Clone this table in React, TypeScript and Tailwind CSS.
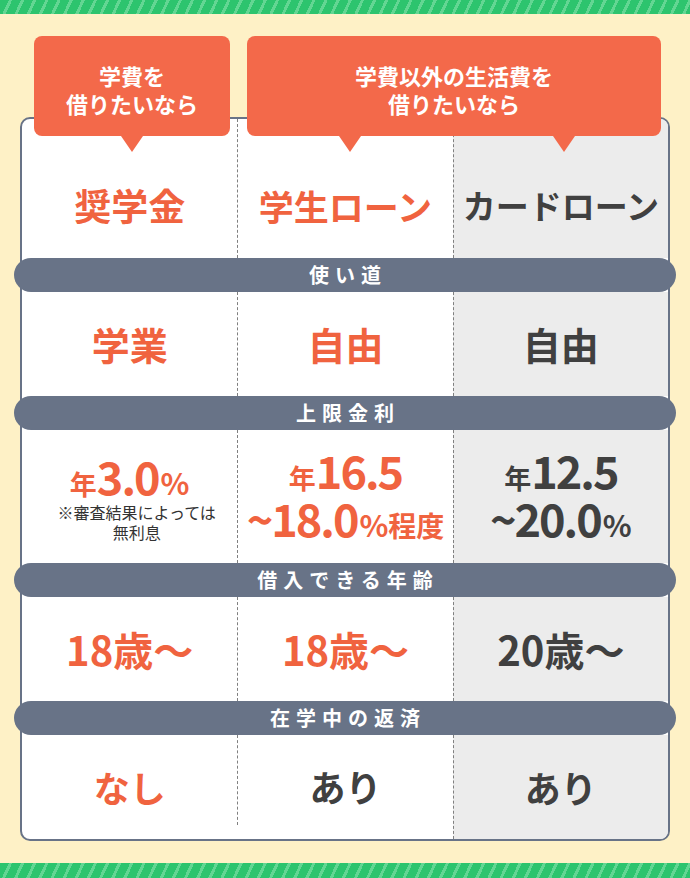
import type { ReactNode } from 'react';

const STRIPE =
  'bg-[repeating-linear-gradient(115deg,#2dc46e_0px,#2dc46e_8px,#63d693_8px,#63d693_11px)]';

function Band({ label }: { label: string }) {
  return (
    <div className="relative z-10 -mx-[8px] flex h-[34px] items-center justify-center rounded-full bg-[#687387]">
      <span className="pl-[6px] text-[20px] font-bold leading-none tracking-[6px] text-white">{label}</span>
    </div>
  );
}

interface RowProps {
  height: string;
  cells: [ReactNode, ReactNode, ReactNode];
  first?: boolean;
  last?: boolean;
  pad?: string;
}

function Row({ height, cells, first, last, pad = '' }: RowProps) {
  return (
    <div className={`grid grid-cols-3 items-start ${height}`}>
      <div className={`flex h-full flex-col items-center justify-center ${pad}`}>{cells[0]}</div>
      <div
        className={`flex flex-col items-center justify-center border-l border-dashed border-[#808080] ${
          last ? 'h-[90px] pt-[12px]' : 'h-full'
        } ${pad}`}
      >
        {cells[1]}
      </div>
      <div
        className={`flex h-full flex-col items-center justify-center border-l border-dashed border-[#808080] bg-[#ececec] ${
          first ? 'rounded-tr-[8px]' : ''
        } ${last ? 'rounded-br-[8px]' : ''} ${pad}`}
      >
        {cells[2]}
      </div>
    </div>
  );
}

function Big({ children, dark, size = 'text-[38px]' }: { children: ReactNode; dark?: boolean; size?: string }) {
  return (
    <span className={`${size} font-bold leading-none ${dark ? 'text-[#404040]' : 'text-[#f0633f]'}`}>
      {children}
    </span>
  );
}

function Triangle({ left }: { left: string }) {
  return (
    <div
      className={`absolute top-full h-0 w-0 border-l-[11px] border-r-[11px] border-t-[16px] border-l-transparent border-r-transparent border-t-[#f3694a] ${left}`}
    />
  );
}

// rate lines: small 年, tall condensed figures, small %
function Rate({ pre, num, post, tail }: { pre?: string; num: string; post?: string; tail?: string }) {
  return (
    <div className="flex h-[48px] items-baseline">
      {pre && <span className="text-[27px] leading-[48px]">{pre}</span>}
      <span className="text-[45px] leading-[48px] tracking-[-2px]">{num}</span>
      {post && <span className="ml-[2px] text-[30px] leading-[48px]">{post}</span>}
      {tail && <span className="text-[28px] leading-[48px]">{tail}</span>}
    </div>
  );
}

export default function App() {
  return (
    <div className="flex h-[878px] w-[690px] flex-col bg-[#fef1c6] font-['Noto_Sans_CJK_JP','Noto_Sans',sans-serif]">
      <div className={`h-[14px] ${STRIPE}`} />

      <div className="flex-1 px-[20px] pt-[22px]">
        {/* callouts */}
        <div className="relative z-20 flex gap-[17px] pl-[14px]">
          <div className="relative flex h-[100px] w-[196px] items-center justify-center rounded-[8px] bg-[#f3694a] pt-[5px]">
            <p className="text-center text-[22px] font-bold leading-[28px] text-white">
              学費を
              <br />
              借りたいなら
            </p>
            <Triangle left="left-[87px]" />
          </div>
          <div className="relative flex h-[100px] w-[414px] items-center justify-center rounded-[8px] bg-[#f3694a] pt-[5px]">
            <p className="text-center text-[22px] font-bold leading-[28px] text-white">
              学費以外の生活費を
              <br />
              借りたいなら
            </p>
            <Triangle left="left-[92px]" />
            <Triangle left="left-[306px]" />
          </div>
        </div>

        {/* table */}
        <div className="-mt-[19px] rounded-[10px] border-2 border-[#687387] bg-white">
          <Row
            first
            height="h-[139px]"
            pad="pt-[34px]"
            cells={[
              <Big size="text-[37px]">奨学金</Big>,
              <Big size="text-[35px]">学生ローン</Big>,
              <Big size="text-[33px]" dark>
                カードローン
              </Big>,
            ]}
          />
          <Band label="使い道" />
          <Row
            height="h-[104px]"
            cells={[<Big>学業</Big>, <Big>自由</Big>, <Big dark>自由</Big>]}
          />
          <Band label="上限金利" />
          <Row
            height="h-[133px]"
            cells={[
              <div className="flex flex-col items-center font-bold text-[#f0633f]">
                <Rate pre="年" num="3.0" post="%" />
                <p className="ml-[14px] mt-[2px] text-center text-[16px] font-normal leading-[20px] text-[#333333]">
                  ※審査結果によっては
                  <br />
                  無利息
                </p>
              </div>,
              <div className="flex flex-col items-center pb-[6px] font-bold text-[#f0633f]">
                <Rate pre="年" num="16.5" />
                <Rate num="~18.0" post="%" tail="程度" />
              </div>,
              <div className="flex flex-col items-center pb-[6px] font-bold text-[#404040]">
                <Rate pre="年" num="12.5" />
                <Rate num="~20.0" post="%" />
              </div>,
            ]}
          />
          <Band label="借入できる年齢" />
          <Row
            height="h-[104px]"
            cells={[
              <Big size="text-[40px]">18歳〜</Big>,
              <Big size="text-[40px]">18歳〜</Big>,
              <Big size="text-[40px]" dark>
                20歳〜
              </Big>,
            ]}
          />
          <Band label="在学中の返済" />
          <Row
            last
            height="h-[104px]"
            cells={[
              <Big size="text-[36px]">なし</Big>,
              <Big size="text-[36px]" dark>
                あり
              </Big>,
              <Big size="text-[36px]" dark>
                あり
              </Big>,
            ]}
          />
        </div>
      </div>

      <div className={`h-[15px] ${STRIPE}`} />
    </div>
  );
}
